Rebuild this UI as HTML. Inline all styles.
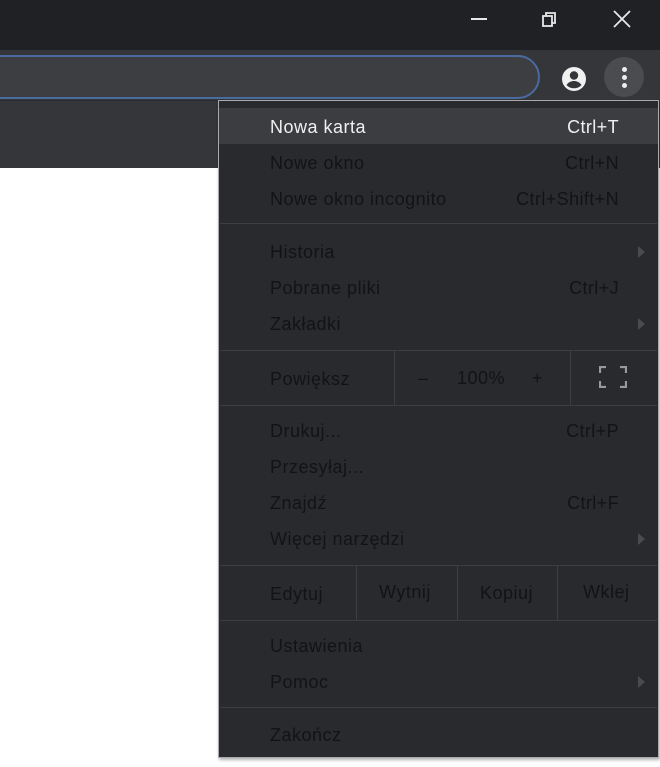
<!DOCTYPE html>
<html><head><meta charset="utf-8"><style>
*{margin:0;padding:0;box-sizing:border-box}
body{width:660px;height:767px;background:#fff;position:relative;overflow:hidden;font-family:"Liberation Sans",sans-serif}
.abs{position:absolute}
.t{position:absolute;font-size:18px;letter-spacing:0.5px;color:#121315;line-height:20px}
.r{position:absolute;font-size:18px;letter-spacing:0.4px;color:#121315;line-height:20px;right:39px;text-align:right}
.sep{position:absolute;left:1px;right:1px;height:1px;background:#3d3e42}
.vs{position:absolute;width:1px;background:#3d3e42}
.arr{position:absolute;right:13px;width:0;height:0;border-left:7px solid #4a4b4e;border-top:6px solid transparent;border-bottom:6px solid transparent}
</style></head><body>
<div class="abs" style="left:0;top:0;width:660px;height:50px;background:#202124"></div>
<div class="abs" style="left:0;top:50px;width:660px;height:118px;background:#35363a"></div>
<div class="abs" style="left:-30px;top:55px;width:570px;height:44px;border-radius:22px;background:#3c3e42;border:2px solid #4a6b9f"></div>
<div class="abs" style="left:0;top:100px;width:660px;height:1px;background:#2a2b2e"></div>
<div class="abs" style="left:471px;top:18px;width:16px;height:2px;background:#e8e8e8"></div>
<svg class="abs" style="left:540px;top:10px" width="20" height="20" viewBox="0 0 20 20"><rect x="3" y="6" width="9" height="10" fill="none" stroke="#e8e8e8" stroke-width="1.8"/><path d="M6 6V3h9v10h-3" fill="none" stroke="#e8e8e8" stroke-width="1.8"/></svg>
<svg class="abs" style="left:612px;top:9px" width="20" height="20" viewBox="0 0 20 20"><path d="M2 2L18 18M18 2L2 18" stroke="#e8e8e8" stroke-width="1.8"/></svg>
<svg class="abs" style="left:560px;top:65px" width="28" height="28" viewBox="0 0 28 28"><circle cx="14" cy="14" r="12" fill="#f1f1f1"/><circle cx="14" cy="10.5" r="4.2" fill="#35363a"/><path d="M6.5 20c2-3 5-4 7.5-4s5.5 1 7.5 4c-2 2.2-4.5 3.3-7.5 3.3S8.5 22.2 6.5 20z" fill="#35363a"/></svg>
<div class="abs" style="left:604px;top:57px;width:40px;height:40px;border-radius:50%;background:#4b4c50"></div>
<div class="abs" style="left:622px;top:67px;width:5px;height:5px;border-radius:50%;background:#eee"></div>
<div class="abs" style="left:622px;top:75px;width:5px;height:5px;border-radius:50%;background:#eee"></div>
<div class="abs" style="left:622px;top:83px;width:5px;height:5px;border-radius:50%;background:#eee"></div>
<div class="abs" style="left:218px;top:100px;width:441px;height:658px;background:#292a2d;border:1px solid #a9aaac;box-shadow:1px 2px 3px rgba(0,0,0,.3)">
<div class="abs" style="left:0;top:7px;width:439px;height:36px;background:#3c3d41"></div>
</div>
<div class="abs" style="left:219px;top:101px;width:439px;height:656px">
<div class="t" style="left:51px;top:16px;color:#f0f0f0">Nowa karta</div><div class="r" style="top:16px;color:#f0f0f0">Ctrl+T</div>
<div class="t" style="left:51px;top:52px">Nowe okno</div><div class="r" style="top:52px">Ctrl+N</div>
<div class="t" style="left:51px;top:88px">Nowe okno incognito</div><div class="r" style="top:88px">Ctrl+Shift+N</div>
<div class="sep" style="top:122px"></div>
<div class="t" style="left:51px;top:141px">Historia</div><div class="arr" style="top:145px"></div>
<div class="t" style="left:51px;top:177px">Pobrane pliki</div><div class="r" style="top:177px">Ctrl+J</div>
<div class="t" style="left:51px;top:213px">Zakładki</div><div class="arr" style="top:217px"></div>
<div class="sep" style="top:249px"></div>
<div class="t" style="left:51px;top:268px">Powiększ</div>
<div class="vs" style="left:175px;top:250px;height:54px"></div>
<div class="t" style="left:199px;top:267px">–</div>
<div class="t" style="left:238px;top:267px">100%</div>
<div class="t" style="left:313px;top:267px">+</div>
<div class="vs" style="left:351px;top:250px;height:54px"></div>
<svg class="abs" style="left:380px;top:265px" width="28" height="22" viewBox="0 0 28 22"><path d="M1 7V1h6M21 1h6v6M27 15v6h-6M7 21H1v-6" fill="none" stroke="#9a9a9c" stroke-width="2.2"/></svg>
<div class="sep" style="top:304px"></div>
<div class="t" style="left:51px;top:320px">Drukuj...</div><div class="r" style="top:320px">Ctrl+P</div>
<div class="t" style="left:51px;top:356px">Przesyłaj...</div>
<div class="t" style="left:51px;top:392px">Znajdź</div><div class="r" style="top:392px">Ctrl+F</div>
<div class="t" style="left:51px;top:428px">Więcej narzędzi</div><div class="arr" style="top:432px"></div>
<div class="sep" style="top:464px"></div>
<div class="t" style="left:51px;top:483px">Edytuj</div>
<div class="vs" style="left:137px;top:465px;height:54px"></div>
<div class="t" style="left:160px;top:481px">Wytnij</div>
<div class="vs" style="left:238px;top:465px;height:54px"></div>
<div class="t" style="left:261px;top:482px">Kopiuj</div>
<div class="vs" style="left:338px;top:465px;height:54px"></div>
<div class="t" style="left:364px;top:481px">Wklej</div>
<div class="sep" style="top:519px"></div>
<div class="t" style="left:51px;top:535px">Ustawienia</div>
<div class="t" style="left:51px;top:571px">Pomoc</div><div class="arr" style="top:575px"></div>
<div class="sep" style="top:606px"></div>
<div class="t" style="left:51px;top:624px">Zakończ</div>
</div>
</body></html>
